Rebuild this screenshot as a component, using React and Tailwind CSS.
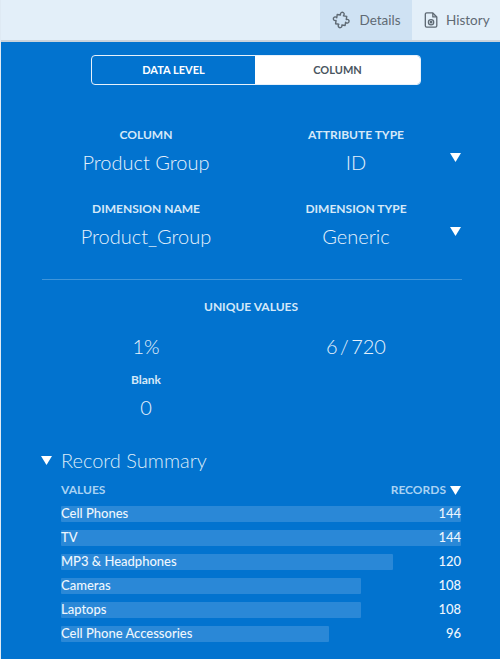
const Tri = ({ className }) => (
  <svg className={className} width="11" height="9" viewBox="0 0 11 9"><path d="M0 0H11L5.5 9Z" fill="#fff" /></svg>
);

const rows = [
  ["Cell Phones", 144, 400],
  ["TV", 144, 400],
  ["MP3 & Headphones", 120, 332],
  ["Cameras", 108, 300],
  ["Laptops", 108, 300],
  ["Cell Phone Accessories", 96, 268],
];

const Field = ({ label, value, arrow }) => (
  <div className="relative flex flex-col items-center">
    <div className="text-[12px] leading-[16px] font-bold text-[#d5e8f8]">{label}</div>
    <div className="mt-[6px] text-[20px] leading-[26px] font-light text-[#e6f1fb]">{value}</div>
    {arrow && <Tri className="absolute right-[0px] top-[26px]" />}
  </div>
);

export default function App() {
  return (
    <div className="w-[500px] h-[659px] overflow-hidden bg-[#0273cf] font-['Lato','Open_Sans',sans-serif] border-l border-[#dfeaf4]">
      <div className="h-[42px] flex justify-end bg-[#e3eff9] border-b-2 border-[#c9d3dc] text-[#5f6a74] text-[13.500px]">
        <div className="w-[92px] flex items-center justify-center gap-[8px] bg-[#cfe2f3]">
          <svg width="20" height="20" viewBox="0 0 24 24" fill="none" stroke="#5f6a74" strokeWidth="1.700" strokeLinejoin="round">
            <g transform="rotate(14 12 12)">
              <path d="M10 3.500c1.500-1.800 4.700-.6 4 1.800l-.4 1.200 4-.4.4 3.800 1-.4c2.400-.7 3.800 2.300 2 3.800-.9.800-2 .7-3 .1l.4 3.800-3.900.4.300 1c.5 2.300-2.400 3.600-3.900 1.900-.8-.9-.7-2-.2-2.900l-3.900.4-.4-3.900-1 .3c-2.300.6-3.700-2.300-2-3.800.9-.8 2-.7 3-.1l-.4-3.800 3.900-.4-.3-1c-.2-.7 0-1.300.4-1.800Z" />
            </g>
          </svg>
          <span>Details</span>
        </div>
        <div className="w-[88px] flex items-center gap-[7px] pl-[12px]">
          <svg width="15" height="18" viewBox="0 0 17 19" fill="none" stroke="#5f6a74" strokeWidth="1.500" strokeLinejoin="round">
            <path d="M3 1.500h7l4.500 4.500v10a1.500 1.500 0 0 1-1.500 1.500H3a1.500 1.500 0 0 1-1.500-1.500V3A1.500 1.500 0 0 1 3 1.500Z" />
            <path d="M10 1.500V6h4.500" />
            <circle cx="8" cy="12" r="3" />
            <circle cx="8" cy="12" r="0.800" fill="#5f6a74" />
          </svg>
          <span>History</span>
        </div>
      </div>

      <div className="mt-[13px] ml-[90px] w-[330px] h-[30px] flex rounded-[4px] border border-[#e6f1fb] overflow-hidden text-[11px] font-bold">
        <div className="w-[163px] flex items-center justify-center text-white">DATA LEVEL</div>
        <div className="flex-1 flex items-center justify-center bg-white text-[#4a5560]">COLUMN</div>
      </div>

      <div className="mt-[42px] ml-[40px] w-[420px] grid grid-cols-2 gap-y-[26px]">
        <Field label="COLUMN" value="Product Group" />
        <Field label="ATTRIBUTE TYPE" value="ID" arrow />
        <Field label="DIMENSION NAME" value="Product_Group" />
        <Field label="DIMENSION TYPE" value="Generic" arrow />
      </div>

      <div className="mt-[30px] ml-[41px] w-[420px] border-t border-[#3f95da]" />

      <div className="mt-[19px] ml-[40px] w-[420px] text-center text-[12px] leading-[16px] font-bold text-[#d5e8f8]">UNIQUE VALUES</div>
      <div className="mt-[18px] ml-[40px] w-[420px] grid grid-cols-2 text-center text-[20px] leading-[26px] font-light text-[#e6f1fb]">
        <div>1%</div>
        <div className="[word-spacing:-3px]">6 / 720</div>
      </div>
      <div className="mt-[13px] ml-[40px] w-[210px] text-center text-[12px] leading-[16px] font-bold text-[#d5e8f8]">Blank</div>
      <div className="mt-[6px] ml-[40px] w-[210px] text-center text-[20px] leading-[26px] font-light text-[#e6f1fb]">0</div>

      <div className="mt-[27px] ml-[40px] flex items-center gap-[9px]">
        <Tri />
        <span className="text-[20px] leading-[26px] font-light text-[#dcebf8]">Record Summary</span>
      </div>

      <div className="mt-[9px] ml-[60px] w-[400px] flex justify-between items-center text-[12px] leading-[16px] font-bold text-[#a9d2f3]">
        <span>VALUES</span>
        <span className="flex items-center gap-[4px]">RECORDS <Tri /></span>
      </div>

      <div className="mt-[8px] ml-[60px] w-[400px] flex flex-col gap-[8px]">
        {rows.map(([name, n, w]) => (
          <div key={name} className="relative h-[16px] flex justify-between items-center text-[13px] font-medium text-[#eef6fd]">
            <div className="absolute left-0 top-0 h-full bg-[#2a88d7] rounded-[1px]" style={{ width: w }} />
            <span className="relative">{name}</span>
            <span className="relative">{n}</span>
          </div>
        ))}
      </div>
    </div>
  );
}
